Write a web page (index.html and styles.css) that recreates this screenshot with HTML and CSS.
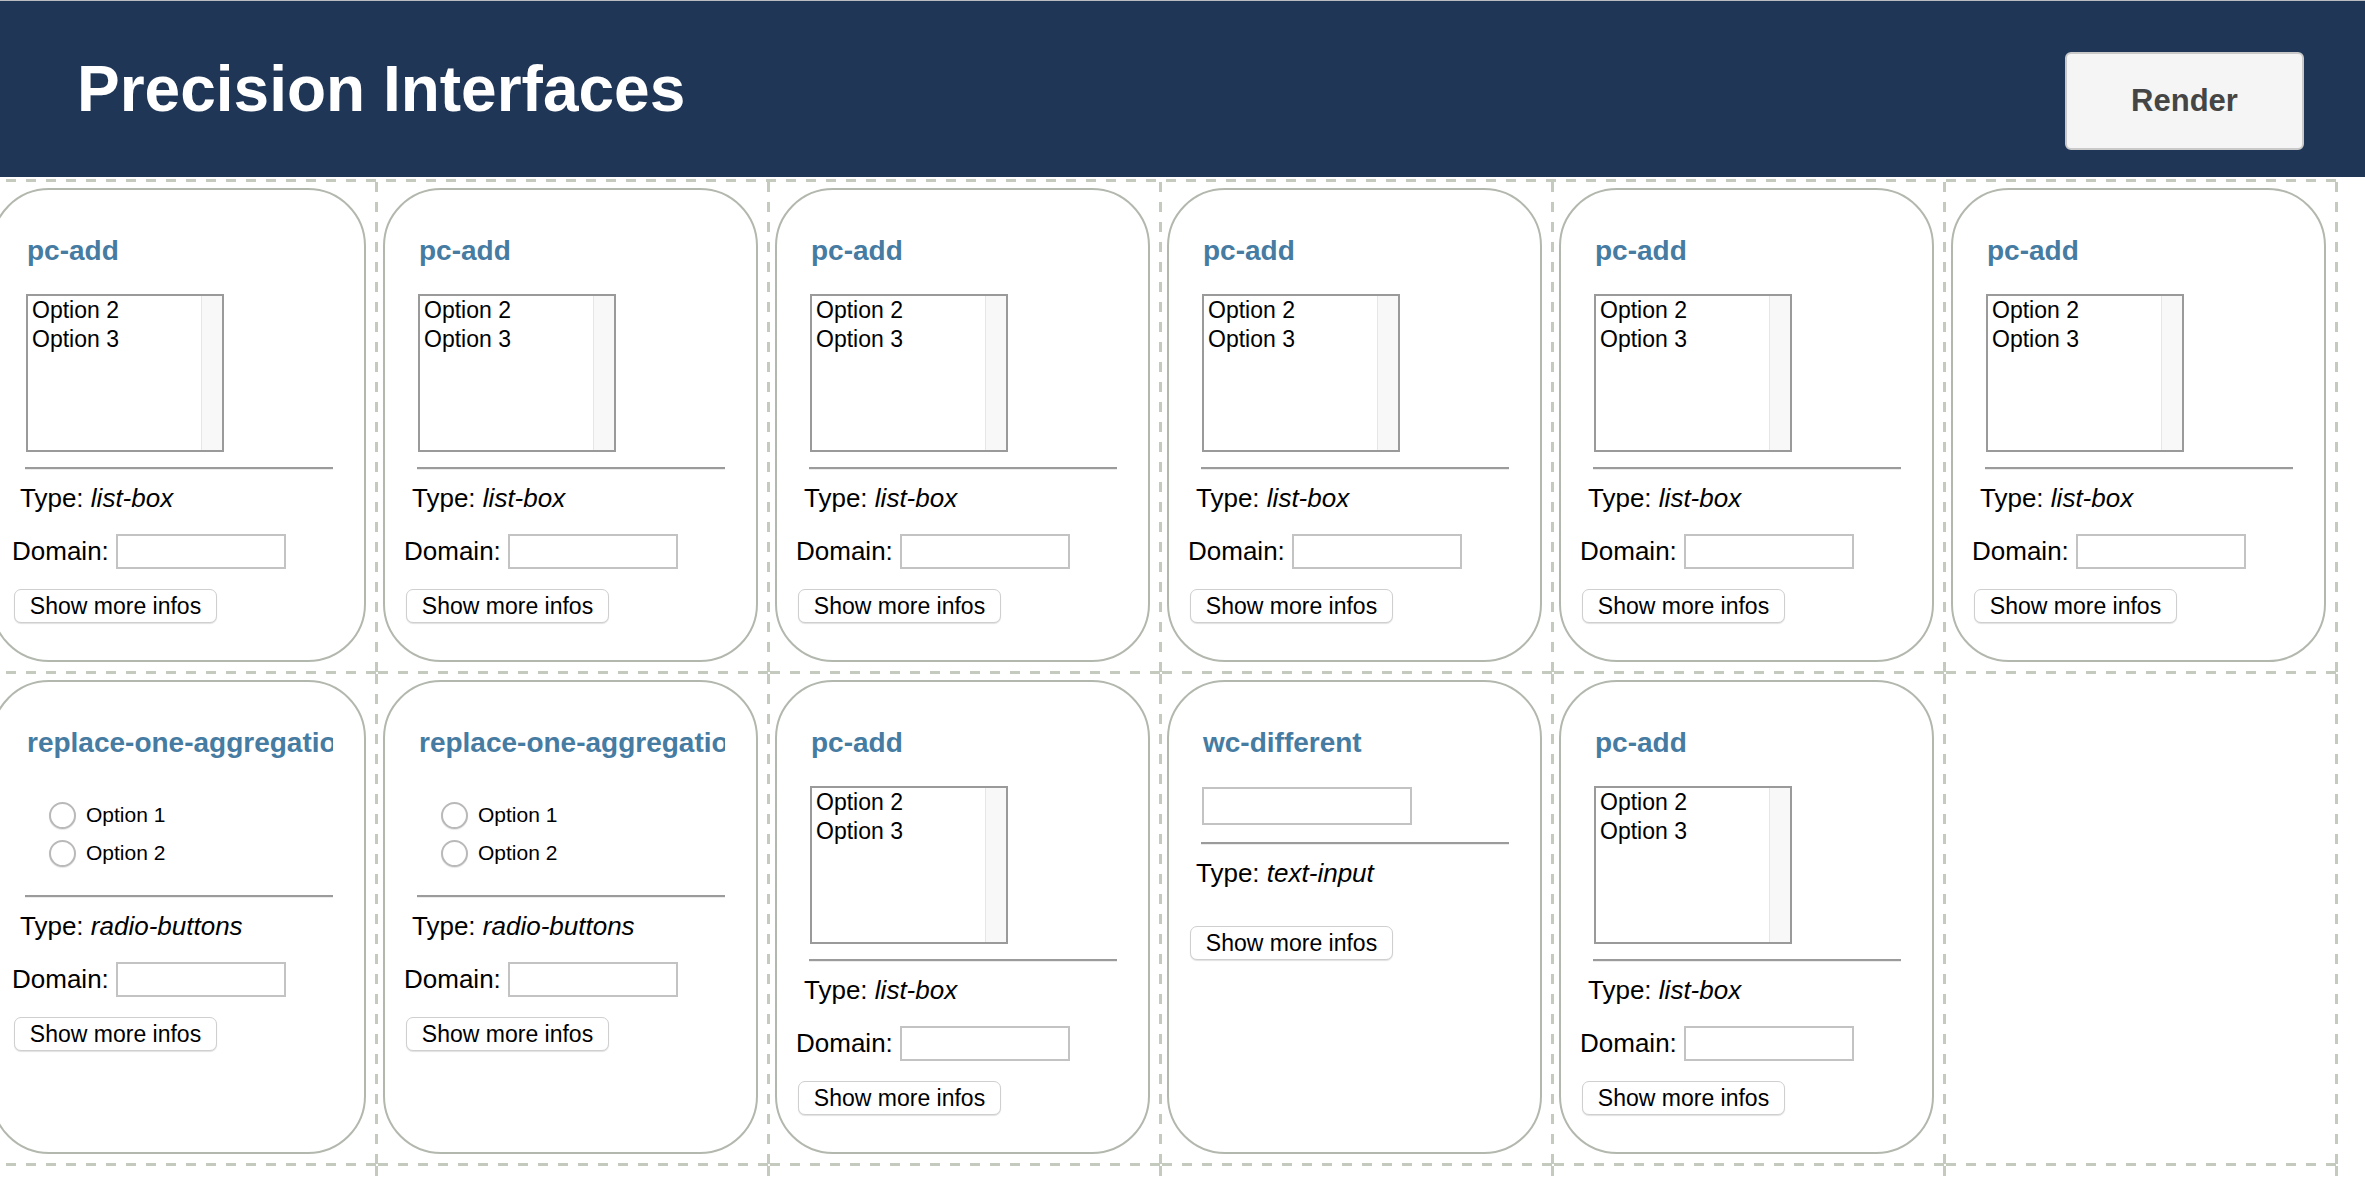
FILE: index.html
```html
<!DOCTYPE html>
<html lang="en">
<head>
    <meta charset="UTF-8">
    <meta name="viewport" content="width=device-width, initial-scale=1.0">
    <title>Precision Interfaces</title>
    <link rel="stylesheet" href="styles.css">
</head>
<body>
    <div class="topbar">
        <h1>Precision Interfaces</h1>
        <button class="render-btn">Render</button>
    </div>

    <div class="board">
        <!-- row 1 -->
        <div class="cell">
            <div class="card">
                <div class="widget">
                    <div class="widget-name">pc-add</div>
                    <div class="listbox"><div class="listbox-options"><div>Option 2</div><div>Option 3</div></div><div class="listbox-track"></div></div>
                    <hr class="divider">
                </div>
                <p class="type">Type: <em>list-box</em></p>
                <div class="domain"><label>Domain:</label><input type="text"></div>
                <button class="more-btn">Show more infos</button>
            </div>
        </div>
        <div class="cell">
            <div class="card">
                <div class="widget">
                    <div class="widget-name">pc-add</div>
                    <div class="listbox"><div class="listbox-options"><div>Option 2</div><div>Option 3</div></div><div class="listbox-track"></div></div>
                    <hr class="divider">
                </div>
                <p class="type">Type: <em>list-box</em></p>
                <div class="domain"><label>Domain:</label><input type="text"></div>
                <button class="more-btn">Show more infos</button>
            </div>
        </div>
        <div class="cell">
            <div class="card">
                <div class="widget">
                    <div class="widget-name">pc-add</div>
                    <div class="listbox"><div class="listbox-options"><div>Option 2</div><div>Option 3</div></div><div class="listbox-track"></div></div>
                    <hr class="divider">
                </div>
                <p class="type">Type: <em>list-box</em></p>
                <div class="domain"><label>Domain:</label><input type="text"></div>
                <button class="more-btn">Show more infos</button>
            </div>
        </div>
        <div class="cell">
            <div class="card">
                <div class="widget">
                    <div class="widget-name">pc-add</div>
                    <div class="listbox"><div class="listbox-options"><div>Option 2</div><div>Option 3</div></div><div class="listbox-track"></div></div>
                    <hr class="divider">
                </div>
                <p class="type">Type: <em>list-box</em></p>
                <div class="domain"><label>Domain:</label><input type="text"></div>
                <button class="more-btn">Show more infos</button>
            </div>
        </div>
        <div class="cell">
            <div class="card">
                <div class="widget">
                    <div class="widget-name">pc-add</div>
                    <div class="listbox"><div class="listbox-options"><div>Option 2</div><div>Option 3</div></div><div class="listbox-track"></div></div>
                    <hr class="divider">
                </div>
                <p class="type">Type: <em>list-box</em></p>
                <div class="domain"><label>Domain:</label><input type="text"></div>
                <button class="more-btn">Show more infos</button>
            </div>
        </div>
        <div class="cell">
            <div class="card">
                <div class="widget">
                    <div class="widget-name">pc-add</div>
                    <div class="listbox"><div class="listbox-options"><div>Option 2</div><div>Option 3</div></div><div class="listbox-track"></div></div>
                    <hr class="divider">
                </div>
                <p class="type">Type: <em>list-box</em></p>
                <div class="domain"><label>Domain:</label><input type="text"></div>
                <button class="more-btn">Show more infos</button>
            </div>
        </div>

        <!-- row 2 -->
        <div class="cell">
            <div class="card">
                <div class="widget">
                    <div class="widget-name">replace-one-aggregation</div>
                    <div class="radio-group">
                        <label class="radio-row"><input type="radio" name="roa1">Option 1</label>
                        <label class="radio-row"><input type="radio" name="roa1">Option 2</label>
                    </div>
                    <hr class="divider">
                </div>
                <p class="type">Type: <em>radio-buttons</em></p>
                <div class="domain"><label>Domain:</label><input type="text"></div>
                <button class="more-btn">Show more infos</button>
            </div>
        </div>
        <div class="cell">
            <div class="card">
                <div class="widget">
                    <div class="widget-name">replace-one-aggregation</div>
                    <div class="radio-group">
                        <label class="radio-row"><input type="radio" name="roa2">Option 1</label>
                        <label class="radio-row"><input type="radio" name="roa2">Option 2</label>
                    </div>
                    <hr class="divider">
                </div>
                <p class="type">Type: <em>radio-buttons</em></p>
                <div class="domain"><label>Domain:</label><input type="text"></div>
                <button class="more-btn">Show more infos</button>
            </div>
        </div>
        <div class="cell">
            <div class="card">
                <div class="widget">
                    <div class="widget-name">pc-add</div>
                    <div class="listbox"><div class="listbox-options"><div>Option 2</div><div>Option 3</div></div><div class="listbox-track"></div></div>
                    <hr class="divider">
                </div>
                <p class="type">Type: <em>list-box</em></p>
                <div class="domain"><label>Domain:</label><input type="text"></div>
                <button class="more-btn">Show more infos</button>
            </div>
        </div>
        <div class="cell">
            <div class="card">
                <div class="widget">
                    <div class="widget-name">wc-different</div>
                    <input class="text-field" type="text">
                    <hr class="divider">
                </div>
                <p class="type">Type: <em>text-input</em></p>
                <div class="domain empty"></div>
                <button class="more-btn">Show more infos</button>
            </div>
        </div>
        <div class="cell">
            <div class="card">
                <div class="widget">
                    <div class="widget-name">pc-add</div>
                    <div class="listbox"><div class="listbox-options"><div>Option 2</div><div>Option 3</div></div><div class="listbox-track"></div></div>
                    <hr class="divider">
                </div>
                <p class="type">Type: <em>list-box</em></p>
                <div class="domain"><label>Domain:</label><input type="text"></div>
                <button class="more-btn">Show more infos</button>
            </div>
        </div>
        <div class="cell"></div>

        <!-- row 3 -->
        <div class="cell"></div>
        <div class="cell"></div>
        <div class="cell"></div>
        <div class="cell"></div>
        <div class="cell"></div>
        <div class="cell"></div>
    </div>
</body>
</html>
```

FILE: styles.css
```css
body {
    margin: 0;
    overflow: hidden;
    background: #fff;
    color: #000;
    font-family: "Liberation Sans", Arial, sans-serif;
}
.topbar {
    display: flex;
    align-items: center;
    justify-content: space-between;
    height: 177px;
    box-sizing: border-box;
    border-top: 1px solid #b9bcc0;
    background: #1f3657;
    padding: 0 61px 0 77px;
    margin-bottom: 2px;
}
.topbar h1 {
    margin: 0;
    font-size: 64px;
    font-weight: bold;
    color: #fff;
}
.render-btn {
    width: 239px;
    height: 98px;
    margin-top: 24px;
    background: #f5f5f5;
    border: 2px solid #c9c9c9;
    border-radius: 6px;
    font: bold 31px "Liberation Sans", Arial, sans-serif;
    color: #454545;
}
/* dashed grid lines: 10px dash, 10px gap, 3px thick */
.board {
    display: grid;
    grid-template-columns: repeat(6, 392px);
    width: max-content;
    margin-left: -14px;
    padding-top: 3px;
    background: repeating-linear-gradient(to right, #c5cabf 0 10px, transparent 10px 20px) left top / 100% 3px no-repeat;
}
.cell {
    box-sizing: border-box;
    height: 492px;
    padding: 6px 12px 12px 5px;
    background:
        repeating-linear-gradient(to bottom, #c5cabf 0 10px, transparent 10px 20px) right top / 3px 100% no-repeat,
        repeating-linear-gradient(to right, #c5cabf 0 10px, transparent 10px 20px) left bottom / 100% 3px no-repeat;
}
.card {
    box-sizing: border-box;
    width: 375px;
    height: 474px;
    border: 2px solid #b3b8ae;
    border-radius: 58px;
    padding-top: 45px;
    display: flex;
    flex-direction: column;
    align-items: flex-start;
}
.widget {
    align-self: stretch;
    margin: 0 31px 0 32px;
}
.widget-name {
    padding-left: 2px;
    font-size: 28px;
    line-height: 32px;
    font-weight: bold;
    color: #467ba2;
    white-space: nowrap;
    overflow: hidden;
}
.listbox {
    display: flex;
    width: 198px;
    height: 158px;
    box-sizing: border-box;
    margin: 27px 0 0 1px;
    border: 2px solid #9a9a9a;
    font-size: 23px;
    line-height: 29px;
}
.listbox-options {
    flex: 1;
    padding-left: 4px;
}
.listbox-track {
    width: 20px;
    background: #f8f8f8;
    border-left: 1px solid #e6e6e6;
}
.radio-group {
    margin-top: 37px;
    padding-left: 24px;
    font-size: 21px;
}
.radio-row {
    display: flex;
    align-items: center;
    gap: 10px;
    height: 38px;
}
.radio-row input {
    appearance: none;
    margin: 0;
    width: 27px;
    height: 27px;
    box-sizing: border-box;
    border: 2px solid #b9b9b9;
    border-radius: 50%;
    background: #fff;
    box-shadow: 0 1px 1px rgba(0, 0, 0, 0.1);
}
.text-field {
    display: block;
    width: 210px;
    height: 38px;
    box-sizing: border-box;
    margin: 28px 0 0 1px;
    padding: 0;
    border: 2px solid #c3c3c3;
}
.divider {
    height: 0;
    margin: 15px 0 0;
    border: 0;
    border-top: 2px solid #9b9b9b;
    border-bottom: 1px solid #ececec;
}
.radio-group + .divider {
    margin-top: 23px;
}
.text-field + .divider {
    margin-top: 17px;
}
.type {
    margin: 13px 0 0 27px;
    font-size: 26px;
    line-height: 30px;
}
.domain {
    display: flex;
    align-items: center;
    gap: 7px;
    margin: 21px 0 0 19px;
    font-size: 26px;
}
.domain.empty {
    margin-top: 18px;
}
.domain input {
    width: 170px;
    height: 35px;
    box-sizing: border-box;
    margin: 0;
    padding: 0;
    border: 2px solid #c3c3c3;
}
.more-btn {
    width: 203px;
    height: 34px;
    box-sizing: border-box;
    margin: 20px 0 0 21px;
    padding: 0;
    background: #fff;
    border: 1px solid #cfcfcf;
    border-radius: 7px;
    box-shadow: 0 1px 1px rgba(0, 0, 0, 0.12);
    font: 23px "Liberation Sans", Arial, sans-serif;
    color: #000;
}
```
